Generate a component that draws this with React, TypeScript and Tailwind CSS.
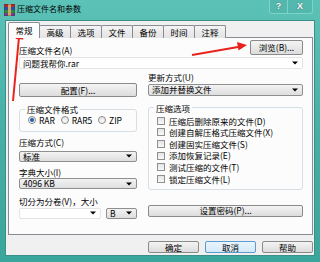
import React from "react";

const Arrow = () => (
  <span className="absolute right-[4px] top-1/2 -translate-y-1/2 w-0 h-0 border-l-[3px] border-r-[3px] border-t-[3px] border-l-transparent border-r-transparent border-t-black" />
);

const Btn: React.FC<{ className?: string; children: React.ReactNode; focus?: boolean }> = ({
  className = "",
  children,
  focus,
}) => (
  <div
    className={`flex items-center justify-center rounded-[2px] border ${
      focus
        ? "border-[#5a9ccf] bg-gradient-to-b from-[#eaf5fc] to-[#d3e9f8]"
        : "border-[#8a8a8a] bg-gradient-to-b from-[#f4f4f4] to-[#dcdcdc]"
    } ${className}`}
  >
    {children}
  </div>
);

const Combo: React.FC<{ className?: string; text?: string; flat?: boolean }> = ({
  className = "",
  text = "",
  flat,
}) => (
  <div
    className={`relative flex items-center pl-[3px] border rounded-[2px] ${
      flat
        ? "bg-white border-[#e3e3e3]"
        : "border-[#8e8f8f] bg-gradient-to-b from-[#f3f3f3] to-[#dedede]"
    } ${className}`}
  >
    <span>{text}</span>
    <Arrow />
  </div>
);

const Radio: React.FC<{ label: string; checked?: boolean }> = ({ label, checked }) => (
  <div className="flex items-center gap-[3px]">
    <span className="w-[8px] h-[8px] rounded-full border border-[#8a8a8a] bg-gradient-to-b from-[#e6e6e6] to-[#fafafa] flex items-center justify-center">
      {checked && <span className="w-[4px] h-[4px] rounded-full bg-[#1c5fb0]" />}
    </span>
    <span>{label}</span>
  </div>
);

const Check: React.FC<{ label: string }> = ({ label }) => (
  <div className="flex items-center gap-[4px] h-[11.6px]">
    <span className="w-[8px] h-[8px] border border-[#8f8f8f] bg-gradient-to-b from-[#e4e4e4] to-[#f8f8f8]" />
    <span>{label}</span>
  </div>
);

const tabs = ["高级", "选项", "文件", "备份", "时间", "注释"];

export default function App() {
  return (
    <div className="relative w-[320px] h-[262px] overflow-hidden flex flex-col bg-gradient-to-b from-[#5cc2b8] via-[#46b0a6] to-[#3aa59b] text-black text-[8.5px] leading-none font-['Noto_Sans_CJK_SC','Liberation_Sans',sans-serif]">
      {/* title bar */}
      <div className="h-[20px] flex items-start shrink-0">
        <svg className="ml-[4px] mt-[4px]" width="11" height="12" viewBox="0 0 11 12">
          <rect x="0" y="0" width="11" height="3" fill="#b8262f" />
          <rect x="0" y="3" width="11" height="3" fill="#2a4fa8" />
          <rect x="0" y="6" width="11" height="3" fill="#2e8a3a" />
          <rect x="0" y="9" width="11" height="3" fill="#7a3a8c" />
          <rect x="4" y="0" width="3" height="12" fill="#c9a86a" />
          <rect x="0" y="0" width="11" height="12" fill="none" stroke="#333" strokeWidth="0.6" />
        </svg>
        <span className="ml-[2px] mt-[5px] text-[8px] text-black">压缩文件名和参数</span>
        <div className="ml-auto mr-[7px] flex h-[14px]">
          <div className="w-[19px] h-[14px] border border-t-0 border-[#7fd2ca] rounded-bl-[3px] bg-[#4db3a9]/60 flex items-center justify-center text-white font-bold text-[9px] font-['Liberation_Sans',sans-serif] [text-shadow:0_0_1px_#333]">
            ?
          </div>
          <div className="w-[25px] h-[14px] border border-t-0 border-l-0 border-[#7fd2ca] rounded-br-[3px] bg-[#4db3a9]/60 flex items-center justify-center text-white font-bold text-[9px] font-['Liberation_Sans',sans-serif] [text-shadow:0_0_1px_#333]">
            X
          </div>
        </div>
      </div>

      {/* client */}
      <div className="mx-[5px] mb-[6px] flex-1 bg-[#f0f0f0] border border-[#3a8f88] pt-[1px] pl-[2px] pr-[1px] flex flex-col">
        {/* tabs */}
        <div className="flex items-end h-[16px] relative z-10">
          <div className="w-[32px] h-[16px] border border-b-0 border-[#898c95] bg-[#fcfcfc] flex items-center justify-center rounded-t-[2px]">
            常规
          </div>
          {tabs.map((t) => (
            <div
              key={t}
              className="w-[32px] h-[13px] -ml-px border border-b-0 border-[#898c95] bg-gradient-to-b from-[#f4f4f4] to-[#e3e3e3] flex items-center justify-center rounded-t-[2px]"
            >
              {t}
            </div>
          ))}
        </div>

        {/* panel */}
        <div className="-mt-px h-[198px] border border-[#898c95] bg-[#fcfcfc] pt-[2px] pl-[10px] pr-[9px] flex flex-col">
          <div className="flex items-end justify-between">
            <span className="mb-[1px]">压缩文件名(A)</span>
            <Btn className="w-[53px] h-[15px]">浏览(B)...</Btn>
          </div>
          <Combo flat className="mt-[2px] h-[12px]" text="问题我帮你.rar" />

          <div className="flex gap-[11px]">
            {/* left column */}
            <div className="w-[118px] flex flex-col">
              <Btn className="mt-[14px] h-[14px]">配置(F)...</Btn>
              <fieldset className="mt-[8px] h-[27px] border border-[#d5dfe5] rounded-[3px] px-[8px]">
                <legend className="px-[2px] ml-[-3px]">压缩文件格式</legend>
                <div className="flex items-center justify-between pr-[6px] mt-[2px]">
                  <Radio label="RAR" checked />
                  <Radio label="RAR5" />
                  <Radio label="ZIP" />
                </div>
              </fieldset>
              <span className="mt-[6px]">压缩方式(C)</span>
              <Combo className="mt-[4px] h-[11px]" text="标准" />
              <span className="mt-[6px]">字典大小(I)</span>
              <Combo className="mt-[2px] h-[11px]" text="4096 KB" />
              <span className="mt-[8px]">切分为分卷(V)，大小</span>
              <div className="mt-[2px] flex gap-[5px]">
                <Combo flat className="w-[82px] h-[11px]" />
                <Combo className="flex-1 h-[11px]" text="B" />
              </div>
            </div>

            {/* right column */}
            <div className="flex-1 flex flex-col">
              <span className="mt-[4px]">更新方式(U)</span>
              <Combo className="mt-[2px] h-[12px]" text="添加并替换文件" />
              <fieldset className="mt-[8px] h-[86px] border border-[#d5dfe5] rounded-[3px] px-[8px]">
                <legend className="px-[2px] ml-[-3px]">压缩选项</legend>
                <div className="flex flex-col mt-[3px]">
                  <Check label="压缩后删除原来的文件(D)" />
                  <Check label="创建自解压格式压缩文件(X)" />
                  <Check label="创建固实压缩文件(S)" />
                  <Check label="添加恢复记录(E)" />
                  <Check label="测试压缩的文件(T)" />
                  <Check label="锁定压缩文件(L)" />
                </div>
              </fieldset>
              <Btn className="mt-[15px] h-[12px]">设置密码(P)...</Btn>
            </div>
          </div>
        </div>

        {/* bottom buttons */}
        <div className="mt-[6px] flex justify-end gap-[6px]">
          <Btn className="w-[51px] h-[12px]">确定</Btn>
          <Btn focus className="w-[51px] h-[12px]">取消</Btn>
          <Btn className="w-[51px] h-[12px]">帮助</Btn>
        </div>
      </div>

      {/* red annotation arrows */}
      <svg className="absolute inset-0 pointer-events-none" width="320" height="262">
        <line x1="13" y1="101" x2="19" y2="37" stroke="#e8221c" strokeWidth="2" />
        <polygon points="20,30 15.5,39 23.5,39.5" fill="#e8221c" />
        <line x1="192" y1="55" x2="238" y2="47" stroke="#e8221c" strokeWidth="2" />
        <polygon points="247,45 237,42 238.5,50.5" fill="#e8221c" />
      </svg>
    </div>
  );
}
